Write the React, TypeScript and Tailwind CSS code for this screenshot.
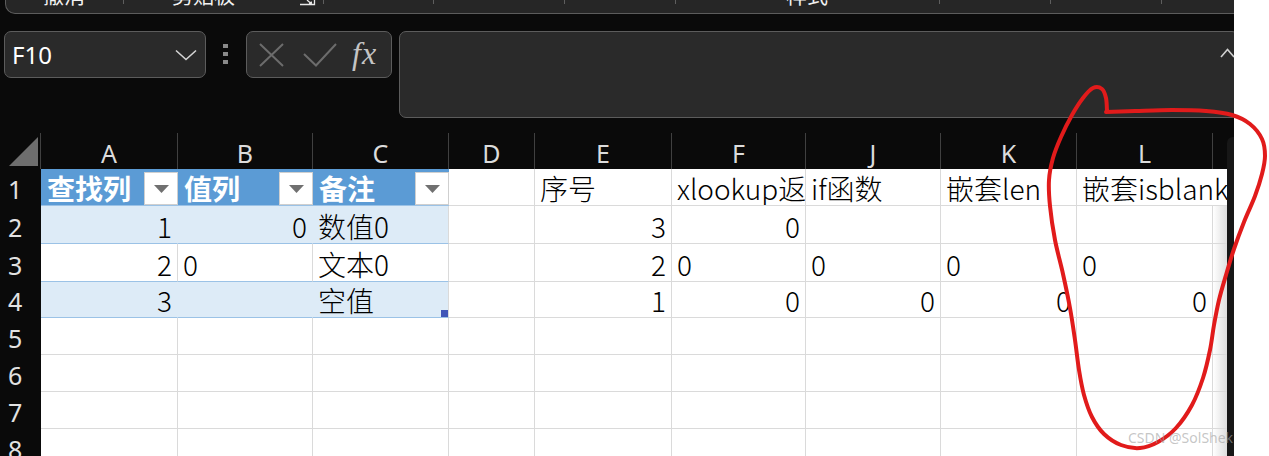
import React from 'react';

const cjk = "font-['Noto_Sans_CJK_SC',sans-serif]";
const ui = "font-['Noto_Sans','Noto_Sans_CJK_SC',sans-serif]";

const tableCols = ['w-[137px]', 'w-[135px]', 'w-[136px]'];
const restCols = ['w-[86px]', 'w-[137px]', 'w-[134px]', 'w-[135px]', 'w-[136px]', 'w-[136px]'];
const headers = [
  { k: 'A', w: 'w-[137px]' },
  { k: 'B', w: 'w-[135px]' },
  { k: 'C', w: 'w-[136px]' },
  { k: 'D', w: 'w-[86px]' },
  { k: 'E', w: 'w-[137px]' },
  { k: 'F', w: 'w-[134px]' },
  { k: 'J', w: 'w-[135px]' },
  { k: 'K', w: 'w-[136px]' },
  { k: 'L', w: 'w-[136px]' },
];
const rowH = ['h-[37px]', 'h-[38px]', 'h-[38px]', 'h-[36px]', 'h-[37px]', 'h-[37px]', 'h-[37px]', 'h-[37px]'];

type C = { t?: string; r?: boolean };

const tableBody: C[][] = [
  [{ t: '1', r: true }, { t: '0', r: true }, { t: '数值0' }],
  [{ t: '2', r: true }, { t: '0' }, { t: '文本0' }],
  [{ t: '3', r: true }, {}, { t: '空值' }],
];

const rest: C[][] = [
  [{}, { t: '序号' }, { t: 'xlookup返' }, { t: 'if函数' }, { t: '嵌套len' }, { t: '嵌套isblank' }],
  [{}, { t: '3', r: true }, { t: '0', r: true }, {}, {}, {}],
  [{}, { t: '2', r: true }, { t: '0' }, { t: '0' }, { t: '0' }, { t: '0' }],
  [{}, { t: '1', r: true }, { t: '0', r: true }, { t: '0', r: true }, { t: '0', r: true }, { t: '0', r: true }],
];

// hand drawn red loop
const loop = [
  [1106, 112], [1135, 111], [1172, 110], [1206, 111], [1232, 115], [1250, 124], [1262, 139], [1265, 156],
  [1262, 174], [1255, 196], [1244, 222], [1234, 249], [1226, 275], [1219, 300], [1214, 325], [1210, 350],
  [1203, 378], [1192, 405], [1176, 428], [1158, 442], [1140, 448], [1121, 445], [1104, 434], [1092, 417],
  [1084, 395], [1079, 370], [1075, 340], [1070, 308], [1063, 274], [1055, 240], [1050, 206], [1049, 180],
  [1053, 158], [1061, 137], [1072, 115], [1083, 98], [1093, 88], [1102, 89], [1106, 98], [1107, 111],
];

function smooth(pts: number[][]) {
  let d = `M${pts[0][0]} ${pts[0][1]}`;
  for (let i = 0; i < pts.length - 1; i++) {
    const p0 = pts[i - 1] || pts[i];
    const p1 = pts[i];
    const p2 = pts[i + 1];
    const p3 = pts[i + 2] || p2;
    const c1 = [p1[0] + (p2[0] - p0[0]) / 6, p1[1] + (p2[1] - p0[1]) / 6];
    const c2 = [p2[0] - (p3[0] - p1[0]) / 6, p2[1] - (p3[1] - p1[1]) / 6];
    d += ` C${c1[0]} ${c1[1]} ${c2[0]} ${c2[1]} ${p2[0]} ${p2[1]}`;
  }
  return d;
}

function Tick() {
  return <div className="w-[1px] h-[4px] bg-[#5e5e5e] shrink-0" />;
}

function RibbonLabel({ children }: { children: React.ReactNode }) {
  return <span className={`${cjk} text-[21px] leading-[22px] -mt-[17px] text-[#f2f2f2] whitespace-nowrap`}>{children}</span>;
}

function Ribbon() {
  return (
    <div className="ml-[5px] w-[1229px] h-[14px] shrink-0 bg-[#262626] border-l border-b border-[#5c5c5c] rounded-bl-[10px] overflow-hidden flex items-start">
      <div className="w-[117px] pl-[37px] flex shrink-0"><RibbonLabel>撤消</RibbonLabel></div>
      <Tick />
      <div className="w-[199px] pl-[48px] flex items-start shrink-0">
        <RibbonLabel>剪贴板</RibbonLabel>
        <svg className="ml-[65px]" width="16" height="6" viewBox="0 0 16 6">
          <path d="M0 4.5 H14.5 V0 M7 0 L11 3.5 M9 3.6 H11.3 V1.5" stroke="#e8e8e8" strokeWidth="1.3" fill="none" />
        </svg>
      </div>
      <Tick />
      <div className="w-[109px] shrink-0" />
      <Tick />
      <div className="w-[130px] shrink-0" />
      <Tick />
      <div className="w-[110px] shrink-0" />
      <Tick />
      <div className="w-[263px] pl-[110px] flex shrink-0"><RibbonLabel>样式</RibbonLabel></div>
      <Tick />
      <div className="w-[110px] shrink-0" />
      <Tick />
      <div className="w-[110px] shrink-0" />
      <Tick />
    </div>
  );
}

function FormulaRow() {
  return (
    <div className="mt-[17px] h-[87px] shrink-0 flex items-start">
      <div className="ml-[4px] w-[202px] h-[47px] shrink-0 rounded-[7px] border border-[#5c5c5c] bg-[#2a2a2a] flex items-center justify-between pl-[7px] pr-[8px]">
        <span className={`${ui} text-[24px] leading-[24px] text-white`}>F10</span>
        <svg width="22" height="12" viewBox="0 0 22 12">
          <polyline points="1,1.5 11,10.5 21,1.5" stroke="#d4d4d4" strokeWidth="1.6" fill="none" />
        </svg>
      </div>
      <div className="ml-[17px] mt-[13px] w-[5px] flex flex-col gap-[4px] shrink-0">
        <div className="w-[5px] h-[4px] bg-[#8a8a8a]" />
        <div className="w-[5px] h-[4px] bg-[#8a8a8a]" />
        <div className="w-[5px] h-[4px] bg-[#8a8a8a]" />
      </div>
      <div className="ml-[18px] w-[146px] h-[47px] shrink-0 rounded-[7px] border border-[#5c5c5c] bg-[#2a2a2a] flex items-center">
        <svg className="ml-[12px]" width="25" height="24" viewBox="0 0 25 24">
          <path d="M1 1 L24 23 M24 1 L1 23" stroke="#6c6c6c" strokeWidth="2" fill="none" />
        </svg>
        <svg className="ml-[19px]" width="34" height="24" viewBox="0 0 34 24">
          <polyline points="1,11 13,22.5 33,1" stroke="#6c6c6c" strokeWidth="2" fill="none" />
        </svg>
        <span className="ml-[15px] font-['Liberation_Serif',serif] italic text-[32px] leading-[32px] tracking-[1px] text-[#c4c4c4] -mt-[3px]">fx</span>
      </div>
      <div className="ml-[7px] w-[840px] h-[87px] shrink-0 rounded-[7px] border border-[#5c5c5c] bg-[#2a2a2a] flex justify-end items-start pr-[3px] pt-[16px]">
        <svg width="15" height="10" viewBox="0 0 15 10">
          <polyline points="1,9 7.5,1.5 14,9" stroke="#d0d0d0" strokeWidth="1.6" fill="none" />
        </svg>
      </div>
    </div>
  );
}

function ColumnHeaders() {
  return (
    <div className="mt-[15px] h-[36px] shrink-0 flex">
      <div className="w-[41px] h-full shrink-0 border-r border-[#404040]">
        <svg width="40" height="36" viewBox="0 0 40 36">
          <polygon points="38,4 38,33 9,33" fill="#6e6e6e" />
        </svg>
      </div>
      {headers.map((h) => (
        <div key={h.k} className={`${h.w} h-full shrink-0 border-r border-[#404040] flex items-end justify-center pb-[3px]`}>
          <span className={`${ui} text-[25px] leading-[25px] text-[#dcdcdc]`}>{h.k}</span>
        </div>
      ))}
      <div className="w-[14px] h-full shrink-0" />
    </div>
  );
}

function RowNum({ n, h }: { n: number; h: string }) {
  return (
    <div className={`${h} w-[41px] shrink-0 bg-[#0a0a0a] flex items-end pl-[8px] pb-[4px]`}>
      <span className={`${ui} text-[25px] leading-[25px] text-[#e2e2e2]`}>{n}</span>
    </div>
  );
}

function Text({ c, className = '' }: { c: C; className?: string }) {
  return <span className={`${cjk} font-light text-[28px] leading-[28px] whitespace-nowrap ${className}`}>{c.t}</span>;
}

function Dropdown() {
  return (
    <div className="w-[34px] h-[33px] shrink-0 bg-white border border-[#cfcfcf] flex items-center justify-center">
      <svg width="15" height="8" viewBox="0 0 15 8">
        <polygon points="0,0 15,0 7.5,8" fill="#707070" />
      </svg>
    </div>
  );
}

function Row({ i }: { i: number }) {
  const h = rowH[i];
  const num = i + 1;
  return (
    <div className={`${h} flex shrink-0`}>
      <RowNum n={num} h={h} />
      {/* table columns */}
      {num === 1 &&
        ['查找列', '值列', '备注'].map((t, k) => (
          <div key={k} className={`${tableCols[k]} h-full shrink-0 bg-[#5b9bd5] border-b border-[#9bc2e6] flex items-end justify-between pl-[6px]`}>
            <span className={`${cjk} text-[28px] leading-[28px] font-bold text-white mb-[3px]`}>{t}</span>
            <Dropdown />
          </div>
        ))}
      {num >= 2 && num <= 4 &&
        tableBody[num - 2].map((c, k) => {
          const band = num % 2 === 0;
          const border = k === 2 || !band ? 'border-r-[#dadada]' : 'border-r-transparent';
          return (
            <div
              key={k}
              className={`${tableCols[k]} h-full shrink-0 relative border-b border-r border-b-[#9bc2e6] ${border} ${band ? 'bg-[#ddebf7]' : 'bg-white'} flex items-end px-[5px] pb-[3px] ${c.r ? 'justify-end' : 'justify-start'}`}
            >
              <Text c={c} className="text-black" />
              {num === 4 && k === 2 && <span className="absolute right-0 bottom-0 w-[7px] h-[7px] bg-[#4156b8]" />}
            </div>
          );
        })}
      {num >= 5 &&
        tableCols.map((w, k) => (
          <div key={k} className={`${w} h-full shrink-0 bg-white border-b border-r border-[#dadada]`} />
        ))}
      {/* remaining columns */}
      {restCols.map((w, k) => {
        const c: C = num <= 4 ? rest[num - 1][k] : {};
        const overflowL = num === 1 && k === 5;
        const clip = num === 1 && k === 2;
        return (
          <div
            key={k}
            className={`${w} h-full shrink-0 bg-white border-b border-[#dadada] flex items-end px-[5px] pb-[3px] ${overflowL ? 'relative z-10' : 'border-r'} ${clip ? 'overflow-hidden' : ''} ${c.r ? 'justify-end' : 'justify-start'}`}
          >
            {c.t && <Text c={c} className="text-black" />}
          </div>
        );
      })}
      <div
        className={`w-[14px] h-full shrink-0 border-b border-[#dadada] ${num === 1 ? 'bg-white' : 'bg-linear-to-r from-white to-[#dedede]'}`}
      />
    </div>
  );
}

export default function App() {
  return (
    <div className="relative w-[1269px] h-[456px] overflow-hidden bg-white flex">
      <div className="w-[1234px] h-full shrink-0 bg-[#0a0a0a] flex flex-col overflow-hidden">
        <Ribbon />
        <FormulaRow />
        <div className="flex flex-1 min-h-0">
          <div className="w-[1227px] shrink-0 flex flex-col overflow-hidden">
            <ColumnHeaders />
            {rowH.map((_, i) => (
              <Row key={i} i={i} />
            ))}
          </div>
          <div className="w-[7px] shrink-0 mt-[19px] rounded-tl-[6px] bg-[#171717]" />
        </div>
      </div>

      <svg className="absolute inset-0 pointer-events-none" width="1269" height="456" viewBox="0 0 1269 456">
        <path d={smooth(loop)} stroke="#e11b1b" strokeWidth="4" fill="none" strokeLinecap="round" strokeLinejoin="round" />
      </svg>
      <span className={`absolute left-[1128px] top-[430px] ${ui} text-[14px] leading-[16px] text-[#a0a0a0]/60 whitespace-nowrap`}>
        CSDN @SolShek
      </span>
    </div>
  );
}
